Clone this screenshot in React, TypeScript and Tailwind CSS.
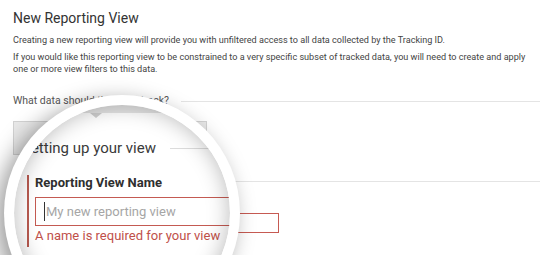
export default function App() {
  return (
    <div className="relative h-[255px] w-[540px] overflow-hidden bg-white font-['Roboto',sans-serif] text-[#333]">
      {/* page behind the lens */}
      <div className="px-[13px] pt-[9px]">
        <h1 className="text-[14px] leading-[18px] text-[#333]">New Reporting View</h1>
        <p className="mt-[7px] text-[9.1px] leading-[12px] text-[#444]">
          Creating a new reporting view will provide you with unfiltered access to all data collected by the Tracking ID.
        </p>
        <p className="-mr-[8px] mt-[6px] text-[9.1px] leading-[11.5px] text-[#444]">
          If you would like this reporting view to be constrained to a very specific subset of tracked data, you will need to create and apply one or more view filters to this data.
        </p>
        <div className="-mr-[13px] mt-[19px] flex items-start gap-3">
          <span className="text-[10.5px] leading-[14px] text-[#555]">What data should this view track?</span>
          <div className="mt-[7px] h-px flex-1 bg-[#e4e4e4]" />
        </div>
        <div className="mt-[13px] h-[34px] w-[194px] border border-[#d2d2d2] bg-[#e9e9e9]" />
        <div className="-mr-[13px] mt-[19px] flex h-[14px] items-center">
          <div className="w-[222px]" />
          <div className="h-px flex-1 bg-[#e4e4e4]" />
        </div>
        <div className="ml-[6px] mt-[9px] border-l-2 border-[#c0564d] pl-[6px]">
          <div className="h-[12px]" />
          <div className="mt-[4px] h-[20px] w-[252px] border border-[#c65a52]" />
          <div className="mt-[1px] h-[12px]" />
        </div>
      </div>

      {/* magnifying lens */}
      <div className="absolute left-[4px] top-[95px] h-[236px] w-[236px] rounded-full bg-white p-[10px] shadow-[-7px_6px_22px_rgba(0,0,0,0.4)]">
        <div className="relative h-full w-full overflow-hidden rounded-full bg-white">
          <div className="h-[8px] bg-[#e4e4e4]" />
          <div className="ml-[76px] h-0 w-0 border-x-[6px] border-t-[5px] border-x-transparent border-t-[#cfcfcf]" />
          <div className="mt-[21px] flex items-center gap-[14px] pl-[8px]">
            <span className="text-[15px] leading-[18px] text-[#3a3a3a]">Setting up your view</span>
            <div className="h-px flex-1 bg-[#dcdcdc]" />
          </div>
          <div className="ml-[13px] mt-[18px] border-l-2 border-[#b85a50] pb-[3px] pl-[6px]">
            <div className="text-[13px] font-bold leading-[16px] text-[#2f2f2f]">Reporting View Name</div>
            <div className="mt-[6px] flex h-[29px] w-[260px] items-center border border-[#c45a52] bg-white pl-[8px]">
              <span className="mr-[1px] h-[19px] w-px bg-[#333]" />
              <span className="text-[13px] text-[#a6a6a6]">My new reporting view</span>
            </div>
            <div className="mt-[2px] text-[13px] leading-[16px] text-[#c0504a]">A name is required for your view</div>
          </div>
          <div className="pointer-events-none absolute inset-0 rounded-full shadow-[inset_0_0_22px_rgba(0,0,0,0.28)]" />
        </div>
      </div>
    </div>
  );
}
